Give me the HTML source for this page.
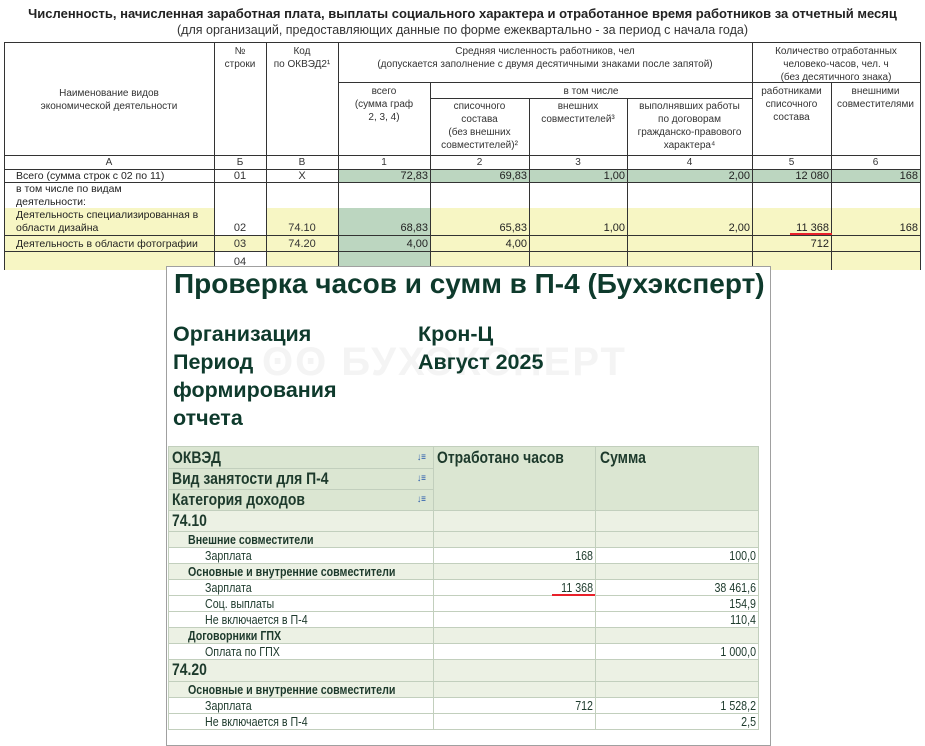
<!DOCTYPE html>
<html><head><meta charset="utf-8"><style>
*{margin:0;padding:0;box-sizing:border-box}
body{width:925px;height:740px;background:#fff;position:relative;overflow:hidden;font-family:"Liberation Sans",Arial,sans-serif}
.a{position:absolute}
.t1{left:0;width:925px;text-align:center;font-weight:bold;font-size:13px;top:6px;color:#222}
.t2{left:0;width:925px;text-align:center;font-size:12.5px;top:23px;color:#333}
.c{position:absolute;font-size:10px;color:#333;text-align:center;line-height:13px}
.hl{position:absolute;background:#333;height:1px}
.vl{position:absolute;background:#333;width:1px}
.g{position:absolute;background:#bcd6c0}
.y{position:absolute;background:#f7f6c4}
.n{position:absolute;font-size:11px;color:#222;text-align:right;line-height:13px}
.l{position:absolute;font-size:11px;color:#222;line-height:13px}
.box{left:166px;top:266px;width:605px;height:480px;background:#fff;border:1px solid #a0a0a0}
.dk{color:#0e3a2c;font-weight:bold}
.r{position:absolute;left:168px;width:591px;border-bottom:1px solid #c2cfbd}
.cl{position:absolute;width:1px;background:#c2cfbd}
.tx{position:absolute;font-size:13px;color:#1d3a2c;line-height:16px;white-space:nowrap;transform:scaleX(.82);transform-origin:left center}
.tr{text-align:right;transform-origin:right center}
</style></head><body>
<div class="a t1">Численность, начисленная заработная плата, выплаты социального характера и отработанное время работников за отчетный месяц</div>
<div class="a t2">(для организаций, предоставляющих данные по форме ежеквартально - за период с начала года)</div>

<div class="y" style="left:5px;top:208px;width:915px;height:62px"></div>
<div class="g" style="left:338px;top:169px;width:582px;height:13px"></div>
<div class="g" style="left:338px;top:208px;width:92px;height:62px"></div>
<div style="position:absolute;left:214px;top:208px;width:52px;height:27px;background:#fff"></div>
<div style="position:absolute;left:214px;top:251px;width:52px;height:19px;background:#fff"></div>

<div class="hl" style="left:4px;top:42px;width:917px"></div>
<div class="hl" style="left:338px;top:82px;width:583px"></div>
<div class="hl" style="left:430px;top:98px;width:322px"></div>
<div class="hl" style="left:4px;top:155px;width:917px"></div>
<div class="hl" style="left:4px;top:169px;width:917px"></div>
<div class="hl" style="left:4px;top:182px;width:917px"></div>
<div class="hl" style="left:4px;top:235px;width:917px"></div>
<div class="hl" style="left:4px;top:251px;width:917px"></div>
<div class="vl" style="left:4px;top:42px;height:228px"></div>
<div class="vl" style="left:214px;top:42px;height:228px"></div>
<div class="vl" style="left:266px;top:42px;height:228px"></div>
<div class="vl" style="left:338px;top:42px;height:228px"></div>
<div class="vl" style="left:430px;top:82px;height:188px"></div>
<div class="vl" style="left:529px;top:98px;height:172px"></div>
<div class="vl" style="left:627px;top:98px;height:172px"></div>
<div class="vl" style="left:752px;top:42px;height:228px"></div>
<div class="vl" style="left:831px;top:82px;height:188px"></div>
<div class="vl" style="left:920px;top:42px;height:228px"></div>

<div class="c" style="left:4px;width:210px;top:87px">Наименование видов<br>экономической деятельности</div>
<div class="c" style="left:214px;width:52px;top:45px">№<br>строки</div>
<div class="c" style="left:266px;width:72px;top:45px">Код<br>по ОКВЭД2¹</div>
<div class="c" style="left:338px;width:414px;top:45px">Средняя численность работников, чел<br>(допускается заполнение с двумя десятичными знаками после запятой)</div>
<div class="c" style="left:752px;width:168px;top:45px">Количество отработанных<br>человеко-часов, чел. ч<br>(без десятичного знака)</div>
<div class="c" style="left:338px;width:92px;top:85px">всего<br>(сумма граф<br>2, 3, 4)</div>
<div class="c" style="left:430px;width:322px;top:85px">в том числе</div>
<div class="c" style="left:430px;width:99px;top:100px">списочного<br>состава<br>(без внешних<br>совместителей)²</div>
<div class="c" style="left:529px;width:98px;top:100px">внешних<br>совместителей³</div>
<div class="c" style="left:627px;width:125px;top:100px">выполнявших работы<br>по договорам<br>гражданско-правового<br>характера⁴</div>
<div class="c" style="left:752px;width:79px;top:85px">работниками<br>списочного<br>состава</div>
<div class="c" style="left:831px;width:89px;top:85px">внешними<br>совместителями</div>
<div class="c" style="left:4px;width:210px;top:156px">А</div>
<div class="c" style="left:214px;width:52px;top:156px">Б</div>
<div class="c" style="left:266px;width:72px;top:156px">В</div>
<div class="c" style="left:338px;width:92px;top:156px">1</div>
<div class="c" style="left:430px;width:99px;top:156px">2</div>
<div class="c" style="left:529px;width:98px;top:156px">3</div>
<div class="c" style="left:627px;width:125px;top:156px">4</div>
<div class="c" style="left:752px;width:79px;top:156px">5</div>
<div class="c" style="left:831px;width:89px;top:156px">6</div>

<div class="l" style="left:16px;top:170px;font-size:10.5px">Всего (сумма строк с 02 по 11)</div>
<div class="c" style="left:214px;width:52px;top:170px;font-size:11px">01</div>
<div class="c" style="left:266px;width:72px;top:170px;font-size:11px">Х</div>
<div class="n" style="left:338px;width:90px;top:170px">72,83</div>
<div class="n" style="left:430px;width:97px;top:170px">69,83</div>
<div class="n" style="left:529px;width:96px;top:170px">1,00</div>
<div class="n" style="left:627px;width:123px;top:170px">2,00</div>
<div class="n" style="left:752px;width:77px;top:170px">12 080</div>
<div class="n" style="left:831px;width:87px;top:170px">168</div>
<div class="l" style="left:16px;top:183px;font-size:10.5px">в том числе по видам<br>деятельности:</div>
<div class="l" style="left:16px;top:209px;font-size:10.5px">Деятельность специализированная в<br>области дизайна</div>
<div class="c" style="left:214px;width:52px;top:222px;font-size:11px">02</div>
<div class="c" style="left:266px;width:72px;top:222px;font-size:11px">74.10</div>
<div class="n" style="left:338px;width:90px;top:222px">68,83</div>
<div class="n" style="left:430px;width:97px;top:222px">65,83</div>
<div class="n" style="left:529px;width:96px;top:222px">1,00</div>
<div class="n" style="left:627px;width:123px;top:222px">2,00</div>
<div class="n" style="left:752px;width:77px;top:222px">11 368</div>
<div class="n" style="left:831px;width:87px;top:222px">168</div>
<div style="position:absolute;left:790px;top:233px;width:42px;height:2px;background:#e8202a"></div>
<div class="l" style="left:16px;top:238px;font-size:10.5px">Деятельность в области фотографии</div>
<div class="c" style="left:214px;width:52px;top:238px;font-size:11px">03</div>
<div class="c" style="left:266px;width:72px;top:238px;font-size:11px">74.20</div>
<div class="n" style="left:338px;width:90px;top:238px">4,00</div>
<div class="n" style="left:430px;width:97px;top:238px">4,00</div>
<div class="n" style="left:752px;width:77px;top:238px">712</div>
<div class="c" style="left:214px;width:52px;top:256px;font-size:11px">04</div>

<div class="a box"></div>
<div class="a dk" style="left:174px;top:268px;font-size:28px;white-space:nowrap">Проверка часов и сумм в П-4 (Бухэксперт)</div>
<div class="a" style="left:262px;top:340px;font-size:40px;font-weight:bold;color:#f4f4f4;letter-spacing:2px;white-space:nowrap">ʘʘ БУХЭКСПЕРТ</div>
<div class="a dk" style="left:173px;top:320px;font-size:21.5px;line-height:28px">Организация<br>Период<br>формирования<br>отчета</div>
<div class="a dk" style="left:418px;top:320px;font-size:21.5px;line-height:28px">Крон-Ц<br>Август 2025</div>

<div style="position:absolute;left:168px;top:447px;width:591px;height:63px;background:#dbe6d2"></div>
<div style="position:absolute;left:168px;top:510px;width:591px;height:37px;background:#ecf1e4"></div>
<div style="position:absolute;left:168px;top:563px;width:591px;height:16px;background:#ecf1e4"></div>
<div style="position:absolute;left:168px;top:627px;width:591px;height:16px;background:#ecf1e4"></div>
<div style="position:absolute;left:168px;top:659px;width:591px;height:38px;background:#ecf1e4"></div>
<div class="r" style="top:446px;height:1px;background:#c2cfbd"></div>
<div class="r" style="top:447px;width:265px;height:22px"></div>
<div class="r" style="top:469px;width:265px;height:21px"></div>
<div class="r" style="top:447px;height:64px"></div>
<div class="r" style="top:511px;height:21px"></div>
<div class="r" style="top:532px;height:16px"></div>
<div class="r" style="top:548px;height:16px"></div>
<div class="r" style="top:564px;height:16px"></div>
<div class="r" style="top:580px;height:16px"></div>
<div class="r" style="top:596px;height:16px"></div>
<div class="r" style="top:612px;height:16px"></div>
<div class="r" style="top:628px;height:16px"></div>
<div class="r" style="top:644px;height:16px"></div>
<div class="r" style="top:660px;height:22px"></div>
<div class="r" style="top:682px;height:16px"></div>
<div class="r" style="top:698px;height:16px"></div>
<div class="r" style="top:714px;height:16px"></div>
<div class="cl" style="left:168px;top:447px;height:283px"></div>
<div class="cl" style="left:433px;top:447px;height:283px"></div>
<div class="cl" style="left:595px;top:447px;height:283px"></div>
<div class="cl" style="left:758px;top:447px;height:283px"></div>

<div class="tx" style="left:172px;top:450px;font-size:17px;font-weight:bold">ОКВЭД</div>
<div class="tx" style="left:172px;top:471px;font-size:17px;font-weight:bold">Вид занятости для П-4</div>
<div class="tx" style="left:172px;top:492px;font-size:17px;font-weight:bold">Категория доходов</div>
<div class="tx" style="left:417px;top:450px;font-size:10px;color:#2255aa">↓≡</div>
<div class="tx" style="left:417px;top:471px;font-size:10px;color:#2255aa">↓≡</div>
<div class="tx" style="left:417px;top:492px;font-size:10px;color:#2255aa">↓≡</div>
<div class="tx" style="left:437px;top:450px;font-size:17px;font-weight:bold">Отработано часов</div>
<div class="tx" style="left:600px;top:450px;font-size:17px;font-weight:bold">Сумма</div>
<div class="tx" style="left:172px;top:513px;font-size:17px;font-weight:bold">74.10</div>
<div class="tx" style="left:188px;top:532px;font-weight:bold">Внешние совместители</div>
<div class="tx" style="left:205px;top:548px">Зарплата</div>
<div class="tx tr" style="left:437px;top:548px;width:156px">168</div>
<div class="tx tr" style="left:600px;top:548px;width:156px">100,0</div>
<div class="tx" style="left:188px;top:564px;font-weight:bold">Основные и внутренние совместители</div>
<div class="tx" style="left:205px;top:580px">Зарплата</div>
<div class="tx tr" style="left:437px;top:580px;width:156px">11 368</div>
<div style="position:absolute;left:552px;top:594px;width:43px;height:2px;background:#e8202a"></div>
<div class="tx tr" style="left:600px;top:580px;width:156px">38 461,6</div>
<div class="tx" style="left:205px;top:596px">Соц. выплаты</div>
<div class="tx tr" style="left:600px;top:596px;width:156px">154,9</div>
<div class="tx" style="left:205px;top:612px">Не включается в П-4</div>
<div class="tx tr" style="left:600px;top:612px;width:156px">110,4</div>
<div class="tx" style="left:188px;top:628px;font-weight:bold">Договорники ГПХ</div>
<div class="tx" style="left:205px;top:644px">Оплата по ГПХ</div>
<div class="tx tr" style="left:600px;top:644px;width:156px">1 000,0</div>
<div class="tx" style="left:172px;top:662px;font-size:17px;font-weight:bold">74.20</div>
<div class="tx" style="left:188px;top:682px;font-weight:bold">Основные и внутренние совместители</div>
<div class="tx" style="left:205px;top:698px">Зарплата</div>
<div class="tx tr" style="left:437px;top:698px;width:156px">712</div>
<div class="tx tr" style="left:600px;top:698px;width:156px">1 528,2</div>
<div class="tx" style="left:205px;top:714px">Не включается в П-4</div>
<div class="tx tr" style="left:600px;top:714px;width:156px">2,5</div>
</body></html>
